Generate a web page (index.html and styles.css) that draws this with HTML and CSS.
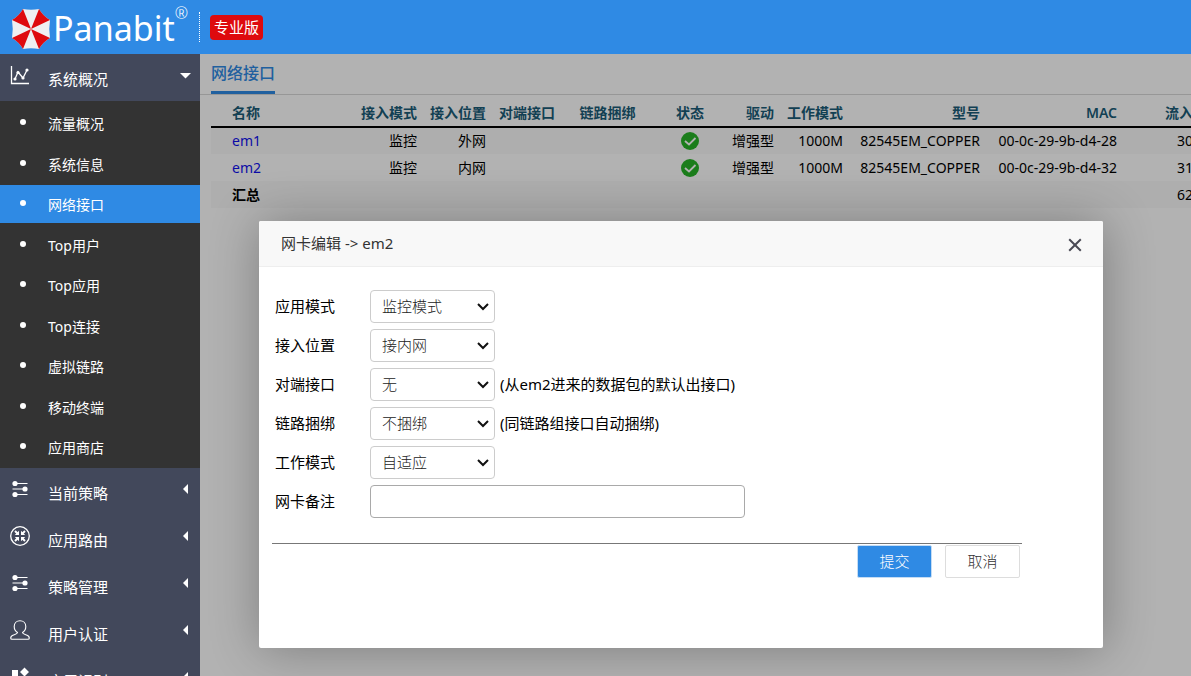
FILE: index.html
```html
<!DOCTYPE html>
<html lang="zh-CN">
<head>
<meta charset="utf-8">
<title>Panabit 专业版</title>
<link rel="stylesheet" href="styles.css">
</head>
<body>
<header class="topbar">
  <a class="brand" href="#">
    <svg class="brand-mark" viewBox="0 0 40 42" aria-hidden="true">
      <path fill="#efeff1" d="M12 1Q20 2.500 28 1Q32 8 39 12Q37.500 21 39 30Q32 34 28 41Q20 39.500 12 41Q8 34 1 30Q2.500 21 1 12Q8 8 12 1Z"/>
      <g fill="#de0a0e"><path d="M20 21L12 1Q8 8 1 12Z"/><path d="M20 21L28 1Q32 8 39 12Z"/><path d="M20 21L39 30Q32 34 28 41Z"/><path d="M20 21L12 41Q8 34 1 30Z"/></g>
      <circle cx="20" cy="21" r="1" fill="#e88"/>
    </svg>
    <span class="brand-name">Panabit</span><sup class="brand-reg">®</sup>
  </a>
  <span class="edition">专业版</span>
</header>
<div class="shell">
  <nav class="sidebar">
    <a class="menu" href="#">
      <svg class="menu-icon" viewBox="0 0 20 20" aria-hidden="true"><path d="M1.500 1v17.500H19M5 14l3-7 5 6 4-8" fill="none" stroke="#fff" stroke-width="1.300"/><g fill="#fff"><circle cx="5" cy="14" r="1.600"/><circle cx="8" cy="7.500" r="1.600"/><circle cx="13" cy="13" r="1.600"/><circle cx="17" cy="5" r="1.600"/></g></svg>
      <span class="menu-text">系统概况</span>
      <svg class="arrow" viewBox="0 0 11 11" aria-hidden="true"><path d="M0 3h11L5.500 8.500z" fill="#fff"/></svg>
    </a>
    <ul class="submenu">
      <li><a href="#">流量概况</a></li>
      <li><a href="#">系统信息</a></li>
      <li><a class="active" href="#">网络接口</a></li>
      <li><a href="#">Top用户</a></li>
      <li><a href="#">Top应用</a></li>
      <li><a href="#">Top连接</a></li>
      <li><a href="#">虚拟链路</a></li>
      <li><a href="#">移动终端</a></li>
      <li><a href="#">应用商店</a></li>
    </ul>
    <a class="menu" href="#">
      <svg class="menu-icon" viewBox="0 0 20 20" aria-hidden="true"><path d="M5 4.500h12.500M2.500 10H16M5 15.500h12.500" stroke="#fff" stroke-width="1.200"/><g fill="#fff"><circle cx="5" cy="4.500" r="2.600"/><circle cx="15" cy="10" r="2.600"/><circle cx="5" cy="15.500" r="2.600"/></g></svg>
      <span class="menu-text">当前策略</span>
      <svg class="arrow" viewBox="0 0 11 11" aria-hidden="true"><path d="M8 0v10L3 5z" fill="#fff"/></svg>
    </a>
    <a class="menu" href="#">
      <svg class="menu-icon" viewBox="0 0 20 20" aria-hidden="true"><circle cx="10" cy="10" r="9.300" fill="none" stroke="#fff" stroke-width="1.300"/><path d="M5 5l3 3M15 5l-3 3M5 15l3-3M15 15l-3-3" stroke="#fff" stroke-width="2"/><path fill="#fff" d="M9 4.800V9H4.800zM11 4.800V9h4.200zM9 15.200V11H4.800zM11 15.200V11h4.200z"/></svg>
      <span class="menu-text">应用路由</span>
      <svg class="arrow" viewBox="0 0 11 11" aria-hidden="true"><path d="M8 0v10L3 5z" fill="#fff"/></svg>
    </a>
    <a class="menu" href="#">
      <svg class="menu-icon" viewBox="0 0 20 20" aria-hidden="true"><path d="M5 4.500h12.500M2.500 10H16M5 15.500h12.500" stroke="#fff" stroke-width="1.200"/><g fill="#fff"><circle cx="5" cy="4.500" r="2.600"/><circle cx="15" cy="10" r="2.600"/><circle cx="5" cy="15.500" r="2.600"/></g></svg>
      <span class="menu-text">策略管理</span>
      <svg class="arrow" viewBox="0 0 11 11" aria-hidden="true"><path d="M8 0v10L3 5z" fill="#fff"/></svg>
    </a>
    <a class="menu" href="#">
      <svg class="menu-icon" viewBox="0 0 20 20" aria-hidden="true"><path d="M7.500 12.500C5 11 4.200 8.500 4.200 6.500C4.200 3 6.700.7 10 .7s5.800 2.300 5.800 5.800c0 2-.8 4.500-3.300 6c0 1.200 1.500 1.500 3.500 2.200c2.500.8 3.300 1.500 3.300 3.300c0 .9-.5 1.300-1.300 1.300H2c-.8 0-1.300-.4-1.300-1.300c0-1.800.8-2.500 3.300-3.300c2-.7 3.500-1 3.500-2.200z" fill="none" stroke="#fff" stroke-width="1.100"/></svg>
      <span class="menu-text">用户认证</span>
      <svg class="arrow" viewBox="0 0 11 11" aria-hidden="true"><path d="M8 0v10L3 5z" fill="#fff"/></svg>
    </a>
    <a class="menu" href="#">
      <svg class="menu-icon" viewBox="0 0 20 20" aria-hidden="true"><path fill="#fff" d="M2 3h6v6H2zM2 11h6v6H2zM11 11h6v6h-6zM14.500.500L19 5l-4.500 4.500L10 5z"/></svg>
      <span class="menu-text">应用识别</span>
      <svg class="arrow" viewBox="0 0 11 11" aria-hidden="true"><path d="M8 0v10L3 5z" fill="#fff"/></svg>
    </a>
  </nav>
  <main class="content">
    <div class="tabs"><a class="tab" href="#">网络接口</a></div>
    <table class="ports">
      <colgroup><col class="w-name"><col class="w-std"><col class="w-std"><col class="w-std"><col class="w-bond"><col class="w-state"><col class="w-driver"><col class="w-std"><col class="w-long"><col class="w-long"><col class="w-flow"></colgroup>
      <thead><tr><th class="left">名称</th><th>接入模式</th><th>接入位置</th><th>对端接口</th><th class="mid">链路捆绑</th><th class="mid">状态</th><th>驱动</th><th>工作模式</th><th>型号</th><th>MAC</th><th>流入</th></tr></thead>
      <tbody>
        <tr><td class="left"><a href="#">em1</a></td><td>监控</td><td>外网</td><td></td><td></td><td class="mid"><svg class="ok" viewBox="0 0 18 18" role="img" aria-label="正常"><circle cx="9" cy="9" r="9" fill="#28b428"/><path d="M4 9l4 3.500L14.500 6" fill="none" stroke="#fff" stroke-width="1.800"/></svg></td><td>增强型</td><td>1000M</td><td>82545EM_COPPER</td><td>00-0c-29-9b-d4-28</td><td>30</td></tr>
        <tr><td class="left"><a href="#">em2</a></td><td>监控</td><td>内网</td><td></td><td></td><td class="mid"><svg class="ok" viewBox="0 0 18 18" role="img" aria-label="正常"><circle cx="9" cy="9" r="9" fill="#28b428"/><path d="M4 9l4 3.500L14.500 6" fill="none" stroke="#fff" stroke-width="1.800"/></svg></td><td>增强型</td><td>1000M</td><td>82545EM_COPPER</td><td>00-0c-29-9b-d4-32</td><td>31</td></tr>
        <tr><td class="left total">汇总</td><td></td><td></td><td></td><td></td><td></td><td></td><td></td><td></td><td></td><td>62</td></tr>
      </tbody>
    </table>
    <div class="shade"></div>
    <section class="dialog" role="dialog" aria-labelledby="dialog-title">
      <div class="dialog-head">
        <h2 id="dialog-title">网卡编辑 -&gt; em2</h2>
        <button class="close" type="button" aria-label="关闭"><svg viewBox="0 0 14 14" aria-hidden="true"><path d="M1.200 1.200l11.600 11.600M12.800 1.200L1.200 12.800" stroke="#4a4a55" stroke-width="2"/></svg></button>
      </div>
      <form class="form">
        <div class="row"><label for="mode">应用模式</label><select id="mode"><option>监控模式</option></select></div>
        <div class="row"><label for="place">接入位置</label><select id="place"><option>接内网</option></select></div>
        <div class="row"><label for="peer">对端接口</label><select id="peer"><option>无</option></select><span>(从em2进来的数据包的默认出接口)</span></div>
        <div class="row"><label for="bond">链路捆绑</label><select id="bond"><option>不捆绑</option></select><span>(同链路组接口自动捆绑)</span></div>
        <div class="row"><label for="work">工作模式</label><select id="work"><option>自适应</option></select></div>
        <div class="row"><label for="note">网卡备注</label><input id="note" type="text"></div>
        <div class="actions"><button class="btn primary" type="button">提交</button><button class="btn" type="button">取消</button></div>
      </form>
    </section>
  </main>
</div>
</body>
</html>
```
FILE: styles.css
```css
* { box-sizing: border-box; }
body {
  margin: 0;
  height: 100vh;
  display: flex;
  flex-direction: column;
  overflow: hidden;
  font: 14px/20px "Noto Sans", "Noto Sans CJK SC", sans-serif;
  color: #000;
}
a { text-decoration: none; }
.topbar {
  flex: none;
  height: 54px;
  display: flex;
  align-items: center;
  padding-left: 11px;
  background: #2f8ae4;
  color: #fff;
}
.brand {
  display: flex;
  align-items: center;
  height: 30px;
  width: 189px;
  border-right: 1px dotted #fff;
  color: #fff;
}
.brand-mark { width: 40px; height: 42px; margin-top: 3px; flex: none; }
.brand-name { margin: 2px 0 0 2px; font: 34px/40px "Noto Sans", sans-serif; }
.brand-reg { align-self: flex-start; margin-top: -9px; font: 300 16px/20px "Noto Sans", sans-serif; }
.edition {
  margin-left: 10px;
  padding: 0 4px 1px;
  border-radius: 4px;
  background: #de0a0e;
  font-size: 15px;
  line-height: 24px;
}
.shell { flex: 1; display: flex; min-height: 0; }
.sidebar { flex: none; width: 200px; background: #42485b; overflow: hidden; }
.menu {
  display: flex;
  align-items: flex-start;
  height: 47px;
  padding: 11px 9px 0 10px;
  color: #fff;
  font-size: 15px;
}
.menu-icon { width: 20px; height: 20px; }
.menu-text { flex: 1; margin: 4px 0 0 18px; }
.arrow { width: 11px; height: 11px; margin-top: 5px; }
.submenu {
  display: flex;
  flex-direction: column;
  justify-content: space-between;
  height: 367px;
  margin: 0;
  padding: 3px 0 2px;
  list-style: none;
  background: #333;
}
.submenu a { display: flex; align-items: center; height: 38px; padding: 2px 0 0 20px; color: #fff; }
.submenu a::before { content: ""; width: 6px; height: 6px; margin: 0 22px 4px 0; border-radius: 50%; background: #fff; }
.submenu .active { background: #2f8ae4; }
.content { flex: 1; min-width: 0; position: relative; overflow: hidden; background: #fff; }
.tabs { display: flex; height: 41px; padding-left: 11px; border-bottom: 1px solid #d8d8d8; }
.tab { height: 40px; border-bottom: 3px solid #2f8ae4; color: #2f8ae4; font-size: 16px; line-height: 38px; font-weight: 500; }
.ports { width: 988px; margin: 4px 0 0 11px; table-layout: fixed; border-collapse: collapse; white-space: nowrap; }
.w-name { width: 143px; }
.w-std { width: 69px; }
.w-bond { width: 93px; }
.w-state { width: 72px; }
.w-driver { width: 54px; }
.w-long { width: 137px; }
.w-flow { width: 76px; }
.ports th, .ports td { height: 27px; padding: 0 6px; text-align: right; line-height: 20px; }
.ports th { height: 28px; border-bottom: 2px solid #000; color: #1a5c78; font-weight: 600; }
.ports .left { padding-left: 21px; text-align: left; }
.ports .mid { text-align: center; }
.ports .total { font-weight: 600; }
.ports tbody tr:nth-child(odd) { background: #f9f9f9; }
.ports a { color: #1010ee; }
.ok { display: block; width: 18px; height: 18px; margin: 0 auto; }
.shade { position: absolute; inset: 0; background: rgba(0, 0, 0, .3); }
.dialog {
  position: absolute;
  top: 167px;
  left: 59px;
  right: 88px;
  min-height: 427px;
  border-radius: 2px;
  background: #fff;
  box-shadow: 1px 1px 50px rgba(0, 0, 0, .3);
}
.dialog-head {
  display: flex;
  align-items: center;
  justify-content: space-between;
  height: 46px;
  padding: 0 21px 0 22px;
  border-bottom: 1px solid #eee;
  border-radius: 2px 2px 0 0;
  background: #f8f8f8;
}
.dialog-head h2 { margin: 0; padding-bottom: 1px; color: #333; font-size: 15px; font-weight: 400; }
.close { width: 14px; height: 14px; margin-top: 2px; padding: 0; border: 0; background: none; }
.close svg { display: block; width: 14px; height: 14px; }
.form { display: flex; flex-direction: column; gap: 6px; padding: 23px 81px 0 13px; font-size: 15px; }
.row { display: flex; align-items: center; height: 33px; padding-left: 3px; }
.row label { width: 95px; padding-bottom: 2px; }
.row select, .row input {
  width: 125px;
  height: 33px;
  margin: 0;
  border: 1px solid #ccc;
  border-radius: 4px;
  background: #fff;
  color: #222;
  font: 300 15px/20px "Noto Sans", "Noto Sans CJK SC", sans-serif;
}
.row select {
  appearance: none;
  padding: 0 0 2px 11px;
  background: #fff url("data:image/svg+xml,%3Csvg xmlns='http://www.w3.org/2000/svg' width='12' height='8'%3E%3Cpath d='M1 1l5 5 5-5' fill='none' stroke='%23111' stroke-width='2'/%3E%3C/svg%3E") no-repeat right 5px center;
}
.row input { width: 375px; padding: 0 8px; border-color: #a9a9a9; }
.row span { margin-left: 5px; padding-bottom: 2px; }
.actions {
  display: flex;
  justify-content: flex-end;
  gap: 13px;
  margin-top: 19px;
  padding: 1px 2px 0 0;
  border-top: 1px solid #777;
}
.btn {
  width: 75px;
  height: 33px;
  padding: 0 0 2px;
  border: 1px solid #ddd;
  border-radius: 2px;
  background: #fff;
  color: #333;
  font: 300 15px/20px "Noto Sans", "Noto Sans CJK SC", sans-serif;
}
.btn.primary { border-color: #c4dcf4; background: #2f8ae4; color: #fff; }
```
